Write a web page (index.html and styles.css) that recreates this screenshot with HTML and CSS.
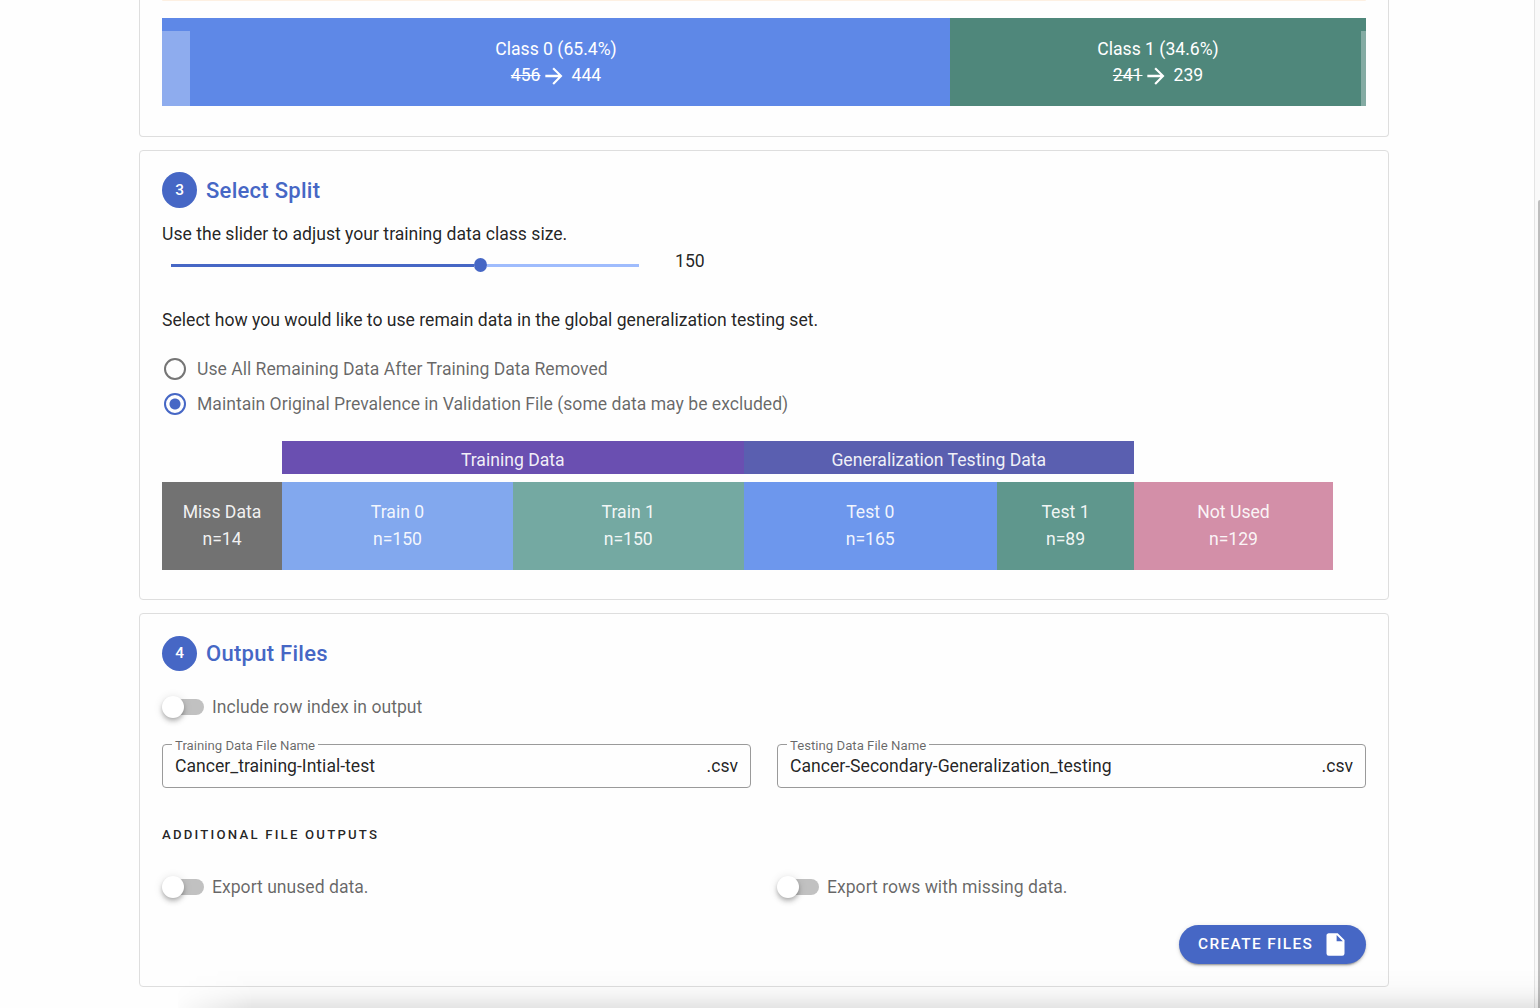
FILE: index.html
```html
<!DOCTYPE html>
<html lang="en">
<head>
<meta charset="utf-8">
<title>Split Data</title>
<link rel="stylesheet" href="styles.css">
</head>
<body>
<main class="page">
  <section class="card card-classes">
    <div class="notice"></div>
    <div class="class-bar">
      <div class="class-block class-zero">
        <div class="removed removed-left"></div>
        <div class="class-name">Class 0 (65.4%)</div>
        <div class="class-count"><s>456</s><svg class="arrow" viewBox="0 0 24 24"><path d="M4 10.800v2.400h12l-5.500 5.500 1.420 1.420L19.840 12l-7.920-7.920L10.500 5.500l5.500 5.300H4z"/></svg><span>444</span></div>
      </div>
      <div class="class-block class-one">
        <div class="removed removed-right"></div>
        <div class="class-name">Class 1 (34.6%)</div>
        <div class="class-count"><s>241</s><svg class="arrow" viewBox="0 0 24 24"><path d="M4 10.800v2.400h12l-5.500 5.500 1.420 1.420L19.840 12l-7.920-7.920L10.500 5.500l5.500 5.300H4z"/></svg><span>239</span></div>
      </div>
    </div>
  </section>

  <section class="card card-split">
    <h2 class="step"><span class="step-number step-number-tall">3</span><span class="step-title">Select Split</span></h2>
    <p class="hint">Use the slider to adjust your training data class size.</p>
    <div class="slider-row">
      <div class="slider"><div class="slider-fill"></div><div class="slider-thumb"></div><div class="slider-rest"></div></div>
      <span class="slider-value">150</span>
    </div>
    <p class="question">Select how you would like to use remain data in the global generalization testing set.</p>
    <div class="radios">
      <label class="radio"><span class="radio-mark"></span><span>Use All Remaining Data After Training Data Removed</span></label>
      <label class="radio"><span class="radio-mark radio-on"></span><span>Maintain Original Prevalence in Validation File (some data may be excluded)</span></label>
    </div>
    <div class="split-chart">
      <div class="group group-train">Training Data</div>
      <div class="group group-test">Generalization Testing Data</div>
      <div class="part miss"><span>Miss Data</span><span>n=14</span></div>
      <div class="part train-zero"><span>Train 0</span><span>n=150</span></div>
      <div class="part train-one"><span>Train 1</span><span>n=150</span></div>
      <div class="part test-zero"><span>Test 0</span><span>n=165</span></div>
      <div class="part test-one"><span>Test 1</span><span>n=89</span></div>
      <div class="part unused"><span>Not Used</span><span>n=129</span></div>
    </div>
  </section>

  <section class="card card-output">
    <h2 class="step"><span class="step-number">4</span><span class="step-title">Output Files</span></h2>
    <label class="switch switch-index"><span class="track"><span class="knob"></span></span><span>Include row index in output</span></label>
    <div class="columns fields">
      <fieldset class="field"><legend>Training Data File Name</legend><div class="field-row"><span>Cancer_training-Intial-test</span><span>.csv</span></div></fieldset>
      <fieldset class="field"><legend>Testing Data File Name</legend><div class="field-row"><span>Cancer-Secondary-Generalization_testing</span><span>.csv</span></div></fieldset>
    </div>
    <h3 class="overline">Additional File Outputs</h3>
    <div class="columns">
      <label class="switch"><span class="track"><span class="knob"></span></span><span>Export unused data.</span></label>
      <label class="switch"><span class="track"><span class="knob"></span></span><span>Export rows with missing data.</span></label>
    </div>
    <div class="actions">
      <button class="create" type="button"><span>Create Files</span><svg class="file" viewBox="0 0 24 24"><path d="M13 9V3.500L18.500 9M6 2c-1.110 0-2 .89-2 2v16a2 2 0 0 0 2 2h12a2 2 0 0 0 2-2V8l-6-6H6z"/></svg></button>
    </div>
  </section>
</main>
<div class="scrollbar"><div class="scroll-thumb"></div></div>
<div class="bottom-shadow"></div>
</body>
</html>
```
FILE: styles.css
```css
* { box-sizing: border-box; }
body {
  margin: 0;
  height: 1008px;
  overflow: hidden;
  position: relative;
  background: #fefefe;
  color: rgba(0, 0, 0, .87);
  font: 400 17.6px/26.4px Roboto, sans-serif;
}
h2, h3, p { margin: 0; }
.page { width: 1250px; margin-left: 139px; display: flex; flex-direction: column; }
.card { border: 1px solid #dedede; border-radius: 4px; padding: 0 22px; margin-bottom: 13px; }
.card-classes { height: 137px; border-top: 0; border-radius: 0 0 4px 4px; }
.notice { height: 1px; background: #fdf0e2; margin-bottom: 17px; border-radius: 0 0 4px 4px; }
.class-bar { display: flex; height: 88px; color: #fff; }
.class-block { position: relative; text-align: center; padding-top: 18px; }
.class-zero { width: 788px; background: #5e88e7; }
.class-one { flex: 1; background: #4f877b; }
.removed { position: absolute; bottom: 0; height: 75px; background: rgba(255, 255, 255, .3); }
.removed-left { left: 0; width: 28px; }
.removed-right { right: 0; width: 5px; }
.class-count { display: flex; justify-content: center; align-items: flex-start; height: 26px; line-height: 26px; }
.arrow { width: 26px; height: 26px; fill: #fff; margin: 1px 5px 0 0; }

.card-split { height: 450px; padding-top: 21px; }
.step { display: flex; align-items: center; height: 36px; color: #4667c5; font-weight: 500; font-size: 22px; letter-spacing: .275px; }
.step-number { width: 35px; height: 35px; border-radius: 50%; background: #4667c5; color: #fff; font-size: 15.4px; line-height: 35px; text-align: center; margin-right: 9px; letter-spacing: 0; }
.step-number-tall { height: 36px; line-height: 37px; }
.step-title { padding-top: 2px; }
.hint { margin-top: 13px; }
.slider-row { display: flex; height: 28px; padding-left: 9px; }
.slider { width: 468px; height: 14px; margin-top: 11px; display: flex; align-items: center; }
.slider-fill { width: 303px; height: 3px; background: #4667c5; }
.slider-thumb { width: 13px; height: 14px; border-radius: 50%; background: #4667c5; }
.slider-rest { flex: 1; height: 3px; background: #9fbcfd; }
.slider-value { margin-left: 36px; padding-top: 1px; }
.question { margin-top: 32px; }
.radios { margin-top: 18px; color: rgba(0, 0, 0, .6); }
.radio { display: flex; align-items: center; height: 35px; }
.radio-mark { width: 22px; height: 22px; border: 2px solid #757575; border-radius: 50%; margin: 0 11px 0 2px; }
.radio-on { border-color: #4667c5; background: radial-gradient(circle, #4667c5 5px, transparent 6px); }
.split-chart {
  display: grid;
  grid-template-columns: 120px 231px 230.5px 253.5px 137px 199px;
  grid-template-rows: 33px 88px;
  row-gap: 8px;
  margin-top: 19px;
  color: rgba(255, 255, 255, .92);
  text-align: center;
}
.group { padding-top: 6px; }
.group-train { grid-column: 2 / 4; background: #6a4fb1; }
.group-test { grid-column: 4 / 6; background: #5a5fb0; }
.part { grid-row: 2; display: flex; flex-direction: column; padding-top: 17px; line-height: 27px; }
.miss { background: #727272; }
.train-zero { background: #82a8ee; }
.train-one { background: #74a9a2; }
.test-zero { background: #6d97ed; }
.test-one { background: #5f978d; }
.unused { background: #d38fa8; }

.card-output { height: 374px; padding-top: 21px; margin-bottom: 0; }
.switch { display: flex; align-items: center; height: 26px; color: rgba(0, 0, 0, .6); }
.switch-index { margin-top: 23px; }
.track { display: flex; align-items: center; width: 37px; height: 16px; margin: 0 8px 0 5px; border-radius: 8px; background: #c1c1c1; }
.knob { width: 22px; height: 22px; margin-left: -5px; border-radius: 50%; background: #fff; box-shadow: 0 2px 4px -1px rgba(0, 0, 0, .2), 0 4px 5px rgba(0, 0, 0, .14), 0 1px 10px rgba(0, 0, 0, .12); }
.columns { display: grid; grid-template-columns: 1fr 1fr; gap: 26px; }
.fields { margin-top: 18px; height: 50px; }
.field { min-width: 0; height: 50px; margin: 0; padding: 0 12px 0 9px; border: 1px solid #9a9a9a; border-radius: 4px; }
.field legend { padding: 2px 3px 0; color: rgba(0, 0, 0, .6); font-size: 13.2px; line-height: 11px; }
.field-row { display: flex; justify-content: space-between; padding-left: 3px; margin-top: 2px; }
.overline { margin-top: 34px; font-size: 13.2px; font-weight: 500; letter-spacing: 2.2px; text-transform: uppercase; line-height: 26px; margin-bottom: 26px; }
.actions { display: flex; justify-content: flex-end; margin-top: 25px; }
.create { display: flex; align-items: center; width: 187px; height: 39px; padding: 0 0 1px 19px; border: 0; border-radius: 20px; background: #4667c5; color: #fff; font: 500 15.4px Roboto, sans-serif; letter-spacing: 1.375px; text-transform: uppercase; box-shadow: 0 3px 1px -2px rgba(0, 0, 0, .2), 0 2px 2px rgba(0, 0, 0, .14), 0 1px 5px rgba(0, 0, 0, .12); }
.file { width: 27px; height: 27px; fill: #fff; margin-left: 9px; }

.scrollbar { position: absolute; top: 0; right: 0; width: 6px; height: 1008px; background: #f9f9f9; border-left: 1px solid #e4e4e4; }
.scroll-thumb { position: absolute; top: 200px; right: 0; width: 2px; height: 808px; border-top-left-radius: 2px; background: #bdbdbd; }
.bottom-shadow {
  position: absolute;
  left: 178px;
  right: 0;
  bottom: 0;
  height: 40px;
  background: linear-gradient(to bottom, transparent, rgba(0, 0, 0, .012) 40%, rgba(0, 0, 0, .035) 65%, rgba(0, 0, 0, .1));
  mask-image: linear-gradient(100deg, transparent, #000 80px);
}
```
